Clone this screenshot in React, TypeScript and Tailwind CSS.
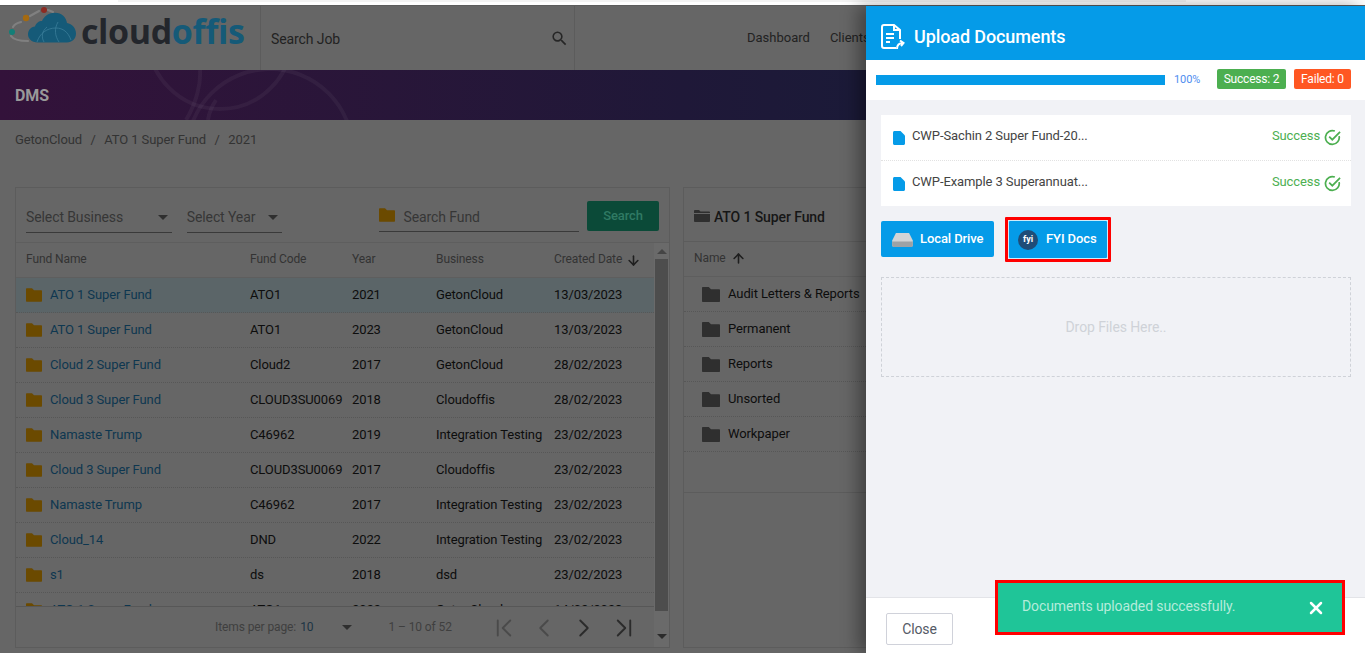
import { ArrowDown, ArrowUp, ChevronFirst, ChevronLast, ChevronLeft, ChevronRight, X } from "lucide-react"
import { MdSearch } from "react-icons/md"

const funds = [
  { name: "ATO 1 Super Fund", code: "ATO1", year: "2021", business: "GetonCloud", date: "13/03/2023" },
  { name: "ATO 1 Super Fund", code: "ATO1", year: "2023", business: "GetonCloud", date: "13/03/2023" },
  { name: "Cloud 2 Super Fund", code: "Cloud2", year: "2017", business: "GetonCloud", date: "28/02/2023" },
  { name: "Cloud 3 Super Fund", code: "CLOUD3SU0069", year: "2018", business: "Cloudoffis", date: "28/02/2023" },
  { name: "Namaste Trump", code: "C46962", year: "2019", business: "Integration Testing", date: "23/02/2023" },
  { name: "Cloud 3 Super Fund", code: "CLOUD3SU0069", year: "2017", business: "Cloudoffis", date: "23/02/2023" },
  { name: "Namaste Trump", code: "C46962", year: "2017", business: "Integration Testing", date: "23/02/2023" },
  { name: "Cloud_14", code: "DND", year: "2022", business: "Integration Testing", date: "23/02/2023" },
  { name: "s1", code: "ds", year: "2018", business: "dsd", date: "23/02/2023" },
  { name: "ATO 1 Super Fund", code: "ATO1", year: "2022", business: "GetonCloud", date: "14/02/2023" },
]

const folders = ["Audit Letters & Reports", "Permanent", "Reports", "Unsorted", "Workpaper"]

const uploads = ["CWP-Sachin 2 Super Fund-20...", "CWP-Example 3 Superannuat..."]

const Folder = ({ className }: { className: string }) => (
  <svg viewBox="0 0 24 20" className={className} fill="currentColor">
    <path d="M0 1C0 .4.4 0 1 0h8l3 3h11c.6 0 1 .4 1 1v15c0 .6-.4 1-1 1H1c-.6 0-1-.4-1-1z" />
  </svg>
)

const Caret = ({ className }: { className: string }) => (
  <span className={`w-0 h-0 border-x-[5px] border-x-transparent border-t-[5px] ${className}`}></span>
)

const Logo = () => (
  <div className="flex items-start">
    <svg viewBox="0 6 78 46" className="w-[78px] h-[46px] shrink-0">
      <path d="M11 36c2 3 8 5 17 5M13 27c1-2 4-4 8-5M30 16l9-5M48 10l5 2" fill="none" stroke="#808080" strokeWidth="2.200" strokeLinecap="round" />
      <circle cx="12" cy="32" r="3" fill="#137f78" />
      <circle cx="26" cy="18" r="3.200" fill="#a56a10" />
      <circle cx="44" cy="10" r="3" fill="#8c2b22" />
      <path d="M38 42.500C31 42.500 28 38 28 34.500 28 30 31 27 35 26.500 36 23 39 21 42 21 44 16 49 12.700 55 12.700 62 12.700 66 17 67 23 72 24 76 28 76 33.500 76 39 72 42.500 67 42.500Z" fill="#155a78" />
      <path d="M37 42c3-9 10-14 19-14 7 0 12 4 15 12M47 27c-5 4-6 10-3 15M58 22c-4 7-3 14 1 20" fill="none" stroke="#3a7d99" strokeWidth="0.800" />
    </svg>
    <span className="ml-[3px] mt-[5px] font-['Open_Sans',sans-serif] text-[34px] leading-[40px] font-bold tracking-[-0.4px] text-[#23262c]">
      cloud<span className="text-[#155a78]">offis</span>
    </span>
  </div>
)

const Tick = () => (
  <svg viewBox="0 0 18 18" className="w-[17px] h-[17px]" fill="none" stroke="#4caf50" strokeWidth="1.800">
    <path d="M16 7.500A7.300 7.300 0 1 1 11.500 2.200" />
    <path d="M5.500 8l3.300 3.300L17 3" />
  </svg>
)

const App = () => {
  return (
    <div className="relative w-[1365px] h-[653px] overflow-hidden bg-[#666666] font-['Roboto',sans-serif] tracking-[-0.1px]">
      <div className="h-[6px] bg-white border-b border-[#5c5c5c]">
        <div className="ml-[118px] w-[1068px] h-[2px] bg-[#f3f3f3]"></div>
      </div>

      <header className="flex h-[64px] items-stretch">
        <div className="w-[261px] border-r border-[#5c5c5c] shrink-0">
          <Logo />
        </div>
        <div className="w-[314px] border-r border-[#5c5c5c] flex items-center justify-between pl-[10px] pr-[5px] pt-[2px]">
          <span className="text-sm text-[#222222]">Search Job</span>
          <MdSearch className="w-[19px] h-[19px] text-[#262626] -mt-[2px]" />
        </div>
        <nav className="flex-1 flex items-center gap-5 pl-[172px] tracking-normal">
          <span className="text-[13px] text-[#222222]">Dashboard</span>
          <span className="text-[13px] text-[#222222]">Clients</span>
        </nav>
      </header>

      <div className="relative h-[50px] overflow-hidden bg-linear-to-r from-[#33123a] via-[#1f1838] to-[#0b1f38] flex items-center px-[15px] pt-[2px]">
        <svg viewBox="0 0 220 50" className="absolute left-[140px] top-0 w-[220px] h-[50px]" fill="none" stroke="#ffffff" strokeOpacity="0.045" strokeWidth="4">
          <circle cx="80" cy="-33" r="72" />
          <circle cx="130" cy="82" r="83" />
          <path d="M60 0c1 12-3 32-14 50M68 50c1-7 4-14 8-20" />
        </svg>
        <h1 className="relative text-base font-bold text-[#999999]">DMS</h1>
      </div>

      <div className="h-[67px] px-[15px] pt-[10px] flex gap-[8.5px] text-[13px] text-[#333333]">
        <span>GetonCloud</span>
        <span>/</span>
        <span>ATO 1 Super Fund</span>
        <span>/</span>
        <span>2021</span>
      </div>

      <div className="flex gap-[13px] pl-[15px]">
        <section className="w-[655px] h-[461px] shrink-0 border border-[#5c5c5c] flex flex-col">
          <div className="h-[55px] flex items-start px-[10px] pt-[14px] border-b border-[#5e5e5e]">
            <div className="w-[146px] h-[31px] border-b border-[#3a3a3a] flex items-center justify-between pr-[4px]">
              <span className="text-sm text-[#363636]">Select Business</span>
              <Caret className="border-t-[#2f2f2f]" />
            </div>
            <div className="w-[95px] h-[31px] ml-[15px] border-b border-[#3a3a3a] flex items-center justify-between pr-[4px]">
              <span className="text-sm text-[#363636]">Select Year</span>
              <Caret className="border-t-[#2f2f2f]" />
            </div>
            <div className="w-[201px] h-[30px] ml-[97px] border-b border-[#3a3a3a] flex items-center gap-[9px]">
              <Folder className="w-4 h-[14px] text-[#6b4a00] -mt-[3px]" />
              <span className="text-sm text-[#363636]">Search Fund</span>
            </div>
            <button className="w-[72px] h-[30px] ml-[8px] -mt-[1px] pb-[1px] rounded-[2px] bg-[#0b4a38] text-[13px] font-medium text-[#307a64]">Search</button>
          </div>

          <div className="flex flex-1 min-h-0">
            <div className="w-[638px] flex flex-col min-h-0">
              <div className="h-[35px] flex items-center pl-[10px] pb-[2px] border-b border-[#5e5e5e] text-xs text-[#333333]">
                <span className="w-[224px]">Fund Name</span>
                <span className="w-[102px]">Fund Code</span>
                <span className="w-[84px]">Year</span>
                <span className="w-[118px]">Business</span>
                <span className="flex items-center gap-[4px]">
                  Created Date <ArrowDown className="w-[15px] h-[15px] text-[#1f1f1f] mt-[2px]" strokeWidth={2.500} />
                </span>
              </div>
              <div className="h-[328px] overflow-hidden">
                {funds.map((f, i) => (
                  <div key={i} className={`h-[35px] flex items-center pl-[10px] border-b border-dotted border-[#575757] text-[13px] text-[#0d0d0d] ${i === 0 ? "bg-[#5b6568]" : ""}`}>
                    <span className="w-[224px] flex items-center gap-[8px] text-[#0e3750]">
                      <Folder className="w-4 h-[14px] text-[#6b4a00] shrink-0" />
                      {f.name}
                    </span>
                    <span className="w-[102px]">{f.code}</span>
                    <span className="w-[84px]">{f.year}</span>
                    <span className="w-[118px] whitespace-nowrap">{f.business}</span>
                    <span>{f.date}</span>
                  </div>
                ))}
              </div>
              <div className="flex-1 border-t border-[#575757] flex items-center pl-[199px] pb-[1px] text-xs text-[#3f3f3f]">
                <span>Items per page:</span>
                <span className="ml-[4px] text-[#1c3444]">10</span>
                <Caret className="ml-[29px] mt-[2px] border-t-[#2f2f2f]" />
                <span className="ml-[36px]">1 – 10 of 52</span>
                <ChevronFirst className="ml-[37px] mt-[2px] w-[30px] h-[30px] text-[#4a4a4a]" strokeWidth={1.500} />
                <ChevronLeft className="ml-[10px] mt-[2px] w-[30px] h-[30px] text-[#4a4a4a]" strokeWidth={1.500} />
                <ChevronRight className="ml-[10px] mt-[2px] w-[30px] h-[30px] text-[#2b2b2b]" strokeWidth={1.500} />
                <ChevronLast className="ml-[10px] mt-[2px] w-[30px] h-[30px] text-[#2b2b2b]" strokeWidth={1.500} />
              </div>
            </div>
            <div className="w-[15px] flex flex-col items-center bg-[#6a6a6a]">
              <div className="h-[16px] flex items-center justify-center">
                <Caret className="rotate-180 border-t-[#454545]" />
              </div>
              <div className="w-[13px] h-[352px] bg-[#4d4d4d]"></div>
              <div className="flex-1 flex items-end justify-center pb-[8px]">
                <Caret className="border-t-[#2b2b2b]" />
              </div>
            </div>
          </div>
        </section>

        <section className="flex-1 h-[461px] border border-[#5c5c5c] flex flex-col">
          <div className="h-[54px] flex items-center gap-[4px] pl-[10px] pt-[5px] border-b border-[#5c5c5c] text-sm font-medium text-[#161616]">
            <svg viewBox="0 0 16 12" className="w-4 h-3 text-[#2f2f2f] -mt-[2px]" fill="currentColor">
              <path d="M0 1c0-.5.5-1 1-1h4l1.500 1.500H15c.5 0 1 .5 1 1V3H0z" />
              <path d="M0 4h16v7c0 .5-.5 1-1 1H1c-.5 0-1-.5-1-1z" />
            </svg>
            ATO 1 Super Fund
          </div>
          <div className="h-[35px] flex items-center gap-[5px] pl-[10px] pb-[2px] border-b border-[#5e5e5e] text-xs text-[#333333]">
            Name <ArrowUp className="w-[15px] h-[15px] text-[#1f1f1f]" strokeWidth={2.500} />
          </div>
          {folders.map((name) => (
            <div key={name} className="h-[35px] flex items-center gap-[8px] pl-[18px] border-b border-dotted border-[#575757] text-[13px] text-[#0d0d0d] whitespace-nowrap">
              <Folder className="w-[18px] h-[15px] text-[#2f2f2f] shrink-0" />
              {name}
            </div>
          ))}
          <div className="h-[41px] border-b border-[#5c5c5c]"></div>
        </section>
      </div>

      <aside className="absolute right-0 top-[6px] bottom-0 w-[499px] flex flex-col bg-[#f1f2f6] shadow-[-8px_0_16px_rgba(0,0,0,0.35)]">
        <div className="h-[54px] shrink-0 flex items-center gap-[9px] pl-[15px] pt-[8px] bg-[#059be8] text-white">
          <svg viewBox="0 0 24 26" className="w-6 h-[26px]" fill="none" stroke="currentColor" strokeWidth="2">
            <path d="M15 24H3a2 2 0 0 1-2-2V3a2 2 0 0 1 2-2h10l6 5v9" />
            <path d="M13 1v5h6M5 10h8M5 14h8M5 18h4" />
            <path d="M16 25c0-4 2-6 6-6M19 16.500l3.500 2.500-2.500 3" />
          </svg>
          <h2 className="text-lg font-medium">Upload Documents</h2>
        </div>

        <div className="h-[40px] shrink-0 bg-white flex items-center pl-[10px] pr-[14px]">
          <div className="w-[289px] h-[10px] bg-[#059be8]"></div>
          <span className="ml-[9px] w-[27px] text-[11px] text-[#4f8ef0]">100%</span>
          <span className="ml-[16px] w-[69px] h-5 -mt-[2px] rounded-[2px] bg-[#4caf50] text-xs tracking-[-0.2px] text-white flex items-center justify-center">Success: 2</span>
          <span className="ml-[8px] w-[57px] h-5 -mt-[2px] rounded-[2px] bg-[#ff5722] text-xs tracking-[-0.2px] text-white flex items-center justify-center">Failed: 0</span>
        </div>

        <div className="flex-1 min-h-0 pl-[15px] pr-[14px] pt-[15px]">
          <ul className="bg-white">
            {uploads.map((name, i) => (
              <li key={name} className={`flex items-center pl-[12px] pr-[10px] ${i === 0 ? "h-[46px] border-b border-dotted border-[#e2e2e2]" : "h-[45px]"}`}>
                <svg viewBox="0 0 12 14" className="w-3 h-[14px] text-[#059be8]" fill="currentColor">
                  <path d="M1.500 0H7.500L12 4.500V12.500c0 .8-.7 1.500-1.500 1.500h-9C.7 14 0 13.300 0 12.500v-11C0 .7.7 0 1.500 0z" />
                </svg>
                <span className="ml-[7px] mb-[3px] flex-1 text-[13px] text-[#444444]">{name}</span>
                <span className="mb-[3px] mr-[4px] text-[13px] text-[#4caf50]">Success</span>
                <Tick />
              </li>
            ))}
          </ul>

          <div className="flex items-start mt-[15px] h-[41px] gap-[11px]">
            <button className="w-[113px] h-9 rounded-[2px] bg-[#059be8] text-[13px] font-medium text-white flex items-center gap-[7px] pl-[11px]">
              <svg viewBox="0 0 22 16" className="w-[21px] h-[15px]">
                <path d="M4 1h14l4 8v5c0 1-1 2-2 2H2c-1 0-2-1-2-2V9z" fill="#d2d4d6" />
                <path d="M0 10h22v4c0 1-1 2-2 2H2c-1 0-2-1-2-2z" fill="#9da2a6" />
              </svg>
              Local Drive
            </button>
            <div className="border-[3px] border-[#ff0000] -mt-[4px] rounded-[1px]">
              <button className="w-[100px] h-[39px] border border-white/80 rounded-[2px] bg-[#059be8] text-[13px] text-white flex items-center gap-[8px] pl-[9px]">
                <span className="w-5 h-5 rounded-full bg-[#1f4d78] text-[9px] font-bold flex items-center justify-center">fyi</span>
                <span className="mb-[2px] font-medium">FYI Docs</span>
              </button>
            </div>
          </div>

          <div className="mt-[15px] h-[100px] border border-dashed border-[#cfd2d8] flex items-center justify-center text-sm text-[#cfd2d8]">
            Drop Files Here..
          </div>
        </div>

        <div className="h-[56px] shrink-0 bg-white border-t border-[#e3e4e8] pl-[20px] pt-[15px]">
          <button className="w-[67px] h-8 rounded-[2px] border border-[#d0d2da] text-sm text-[#555a66]">Close</button>
        </div>
      </aside>

      <div className="absolute left-[995px] top-[580px] w-[350px] h-[55px] border-[3px] border-[#ff0000] bg-[#1fc598] flex items-start justify-between pl-[24px] pr-[16px] pt-[13px]">
        <span className="text-sm text-[#b5ecdb]">Documents uploaded successfully.</span>
        <X className="w-[20px] h-[20px] text-white mt-[2px]" strokeWidth={3} />
      </div>
    </div>
  )
}

export default App
